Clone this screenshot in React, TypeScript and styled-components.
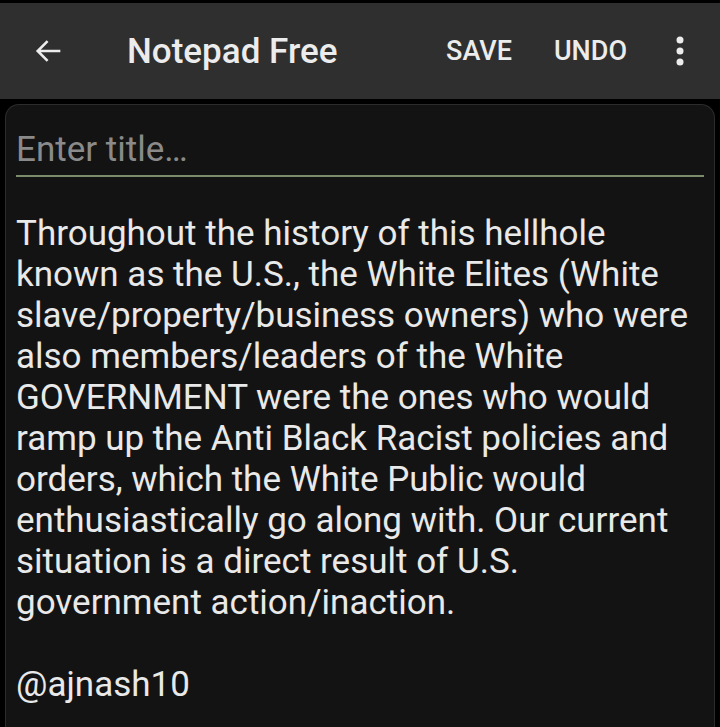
import React from "react";
import styled, { createGlobalStyle } from "styled-components";

const GlobalStyle = createGlobalStyle`
  html, body {
    margin: 0;
    padding: 0;
    background: #000;
    font-family: Roboto, "Noto Sans", sans-serif;
  }
`;

const Screen = styled.div`
  width: 720px;
  height: 727px;
  background: #000;
  overflow: hidden;
  display: flex;
  flex-direction: column;
  padding-top: 3px;
  box-sizing: border-box;
`;

const Toolbar = styled.header`
  height: 96px;
  background: #2f2f2f;
  display: flex;
  align-items: center;
  padding: 0 0 0 32px;
  flex-shrink: 0;
`;

const BackButton = styled.div`
  width: 34px;
  height: 34px;
  display: flex;
  align-items: center;
  justify-content: center;
`;

const Title = styled.h1`
  margin: 0 0 0 61px;
  font-size: 35px;
  font-weight: 500;
  color: #ececec;
  flex: 1;
`;

const Action = styled.span`
  font-size: 27px;
  font-weight: 500;
  color: #ececec;
  margin-right: 42px;
`;

const Overflow = styled.div`
  width: 80px;
  display: flex;
  justify-content: center;
  margin-left: -29px;
`;

const Card = styled.main`
  margin: 5px 5px 0 5px;
  flex: 1;
  background: #131313;
  border: 1px solid #2c2c2c;
  border-bottom: none;
  border-radius: 14px 14px 0 0;
  padding: 25px 10px 0 10px;
  display: flex;
  flex-direction: column;
`;

const TitleField = styled.div`
  font-size: 35px;
  line-height: 40px;
  color: #8a8a8a;
  padding-bottom: 5px;
  border-bottom: 2px solid #7d8a6c;
`;

const Body = styled.div`
  margin-top: 36px;
  font-size: 35px;
  line-height: 41px;
  color: #e9e9e9;
  white-space: pre;
`;

const bodyLines = [
  "Throughout the history of this hellhole",
  "known as the U.S., the White Elites (White",
  "slave/property/business owners) who were",
  "also members/leaders of the White",
  "GOVERNMENT were the ones who would",
  "ramp up the Anti Black Racist policies and",
  "orders, which the White Public would",
  "enthusiastically go along with. Our current",
  "situation is a direct result of U.S.",
  "government action/inaction.",
  "",
  "@ajnash10",
];

export default function App() {
  return (
    <Screen>
      <GlobalStyle />
      <Toolbar>
        <BackButton>
          <svg width="34" height="34" viewBox="0 0 24 24" fill="none">
            <path d="M20 12H4.5M11 5l-7 7 7 7" stroke="#ececec" strokeWidth="1.8" />
          </svg>
        </BackButton>
        <Title>Notepad Free</Title>
        <Action>SAVE</Action>
        <Action>UNDO</Action>
        <Overflow>
          <svg width="10" height="30" viewBox="0 0 10 30">
            <circle cx="5" cy="4" r="3.5" fill="#ececec" />
            <circle cx="5" cy="15" r="3.5" fill="#ececec" />
            <circle cx="5" cy="26" r="3.5" fill="#ececec" />
          </svg>
        </Overflow>
      </Toolbar>
      <Card>
        <TitleField>Enter title…</TitleField>
        <Body>{bodyLines.join("\n")}</Body>
      </Card>
    </Screen>
  );
}
